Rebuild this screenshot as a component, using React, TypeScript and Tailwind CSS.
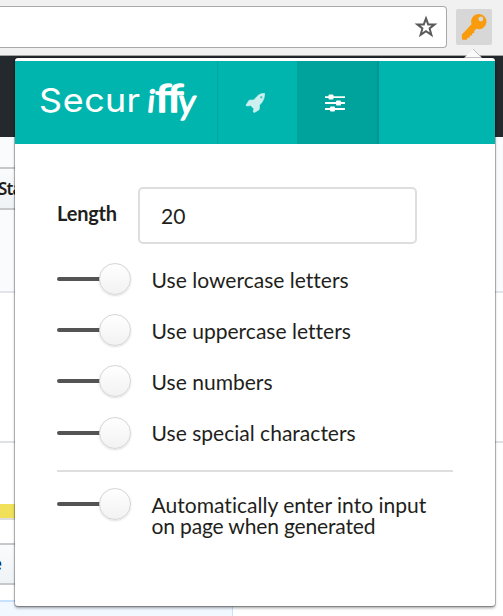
import React from "react";

function Toggle() {
  return (
    <span className="flex h-8 w-[74px] shrink-0 items-center">
      <span className="h-1 w-[43px] rounded-l-full bg-[#545454]" />
      <span className="-ml-px size-8 rounded-full border border-[#d6d6d6] bg-linear-to-b from-white to-[#f2f2f2] shadow-[0_1px_2px_rgba(34,36,38,0.15)]" />
    </span>
  );
}

function Option({ children }: { children: React.ReactNode }) {
  return (
    <label className="flex h-[51.2px] items-start">
      <Toggle />
      <span className="ml-[20.6px] mt-[5.8px] whitespace-nowrap text-[21.05px] leading-[21px]">{children}</span>
    </label>
  );
}

function Logo() {
  return (
    <svg className="h-[83px] w-[202px]" viewBox="15 61 202 83" fill="white" stroke="white" strokeLinejoin="round" strokeLinecap="round">
      <g fontFamily="Inter, sans-serif" fontSize="32.5" strokeWidth="0.1">
        <text transform="translate(39 112.3) scale(1.1 1)" x="0 21.6 41.2 60 79.6">Secur</text>
      </g>
      <g fontFamily="Lato, sans-serif" strokeWidth="1.4">
        <text transform="translate(146.5 112.3) skewX(-6)" fontSize="31">i</text>
        <text transform="translate(155 111.8) scale(1.22 1)" fontSize="39">f</text>
        <text transform="translate(167 111.8) scale(1.22 1)" fontSize="39">f</text>
        <text transform="translate(177.5 113.5) skewX(-6) scale(.94 1)" fontSize="35">y</text>
      </g>
    </svg>
  );
}

function KeyIcon() {
  return (
    <svg className="size-9" viewBox="456 9 36 36">
      <path
        fill="#f89c0e"
        fillRule="evenodd"
        d="M479 14.8a7.6 7.6 0 1 1-2.6 14.8l-2.3 2.2.2 2-2 .3-.2 2.2-2.2.1-.3 2.2-2.1 0-.4 2h-4.4q-.8 0-.8-.8v-4.6l9.6-10.1a7.8 7.8 0 0 1 7.5-10.3zm1.8 2.6a2.4 2.4 0 1 0 .1 4.8 2.4 2.4 0 0 0-.1-4.8z"
        transform="translate(0 -.8)"
      />
    </svg>
  );
}

function RocketIcon() {
  return (
    <svg className="mr-[5px] h-5 w-5" viewBox="245 93 20 20" fill="#ccf0ef">
      <path
        fillRule="evenodd"
        d="M264.5 93.2c.2 4.6-1.2 8.2-5 11.8l-.3 4.3-.4.6-4.6 2.7-.9-.7.6-3.2-3.2-3.2-3.9.5-.8-.8 3.1-4.9 5-.4c3.3-4.4 6-6.5 10.4-6.7zm-3.3 2.7a1.25 1.25 0 1 0 0 2.5 1.25 1.25 0 0 0 0-2.5z"
        stroke="#ccf0ef"
        strokeWidth="0.7"
        strokeLinejoin="round"
      />
    </svg>
  );
}

function Sliders() {
  return (
    <svg className="h-[18px] w-5" viewBox="0 0 20 18" fill="white">
      <path d="M0 2.2h20v1.8H0zM0 8.1h20v1.8H0zM0 14.1h20v1.8H0z" />
      <rect x="3.5" y="0.6" width="5" height="4.8" rx="1" />
      <rect x="11" y="6.6" width="5" height="4.8" rx="1" />
      <rect x="5" y="12.6" width="5" height="4.8" rx="1" />
    </svg>
  );
}

export default function App() {
  return (
    <div className="relative h-[616px] w-[503px] overflow-hidden bg-white font-['Lato',sans-serif] text-[#1f1f20] [font-variant-ligatures:none]">
      <div className="flex h-14 items-start border-b border-[#a3a3a3] bg-[#f1f1f1] pt-1.5">
        <div className="flex h-[42px] w-[447px] items-center justify-end rounded-r-[4px] border border-l-0 border-[#a9a9a9] bg-white pr-2">
          <svg className="size-6" viewBox="0 0 24 24" fill="none" stroke="#5a5a5a" strokeWidth="2">
            <path d="m12 3.4 2.2 6h6.4l-5 4 1.8 6.4-5.4-3.7-5.4 3.7 1.8-6.4-5-4h6.4z" />
          </svg>
        </div>
        <div className="ml-[9px] mt-[3px] size-9 rounded-[2px] bg-[#d7d7d7]">
          <KeyIcon />
        </div>
      </div>
      <div className="h-[81px] bg-[#24292e]" />
      <div className="h-[156px] border-b-2 border-[#e1e4e8] bg-[#fafbfc] pt-[30px]">
        <div className="flex h-[43px] w-10 items-center border-y-2 border-[#c6c9cc] bg-linear-to-b from-[#fafbfc] to-[#eff3f6] font-['Noto_Sans',sans-serif] text-[17px] font-semibold">
          <span className="-ml-0.5 tracking-[-0.9px]">Star</span>
        </div>
      </div>
      <div className="h-[150px] border-b-2 border-[#dfe2e5]" />
      <div className="mt-[61px] h-4 w-10 border-b-2 border-[#dddddd] bg-[#f1e05a]" />
      <div className="mt-[23px] flex h-[42px] w-10 items-center border-y-2 border-[#c6c9cc] bg-linear-to-b from-[#fafbfc] to-[#eff3f6] font-['Noto_Sans',sans-serif] text-[17px] font-semibold text-[#032f62]">
        <span className="-ml-2">e</span>
      </div>
      <div className="mt-[15px] h-4 w-[233px] border-r border-t-2 border-[#c8e1ff] bg-[#f1f8ff]" />

      <svg className="absolute left-[464px] top-12 h-3 w-[18px]" viewBox="0 0 18 12">
        <path d="M0 10 9 1l9 9v2H0z" fill="#fafafa" />
        <path d="m9 1 8.5 8.5" stroke="#bcbcbc" fill="none" />
      </svg>

      <main className="absolute left-[15px] top-[58px] h-[548px] w-[480px] rounded-[3px] bg-white shadow-[0_0_0_1px_rgba(0,0,0,0.22),0_2px_3px_rgba(0,0,0,0.38)]">
        <header className="mt-[3px] flex h-[83px] bg-[#00b5ad]">
          <div className="w-[203px] border-r border-[#00a59e]">
            <Logo />
          </div>
          <button className="flex w-[79px] items-center justify-center">
            <RocketIcon />
          </button>
          <button className="flex w-[82px] items-center justify-center border-r-2 border-[#00958f] bg-[#00a39c] pr-1">
            <Sliders />
          </button>
        </header>
        <section className="px-[42px] pt-[43px]">
          <div className="flex items-start">
            <label className="mt-3 w-[81px] text-[20px] font-bold leading-7 tracking-[-0.2px]">Length</label>
            <div className="flex h-[57px] w-[279px] items-center rounded-[5px] border-2 border-[#dededf] pl-[21px] text-[21.1px]">20</div>
          </div>
          <div className="mt-[19px] h-[207px]">
            <Option>Use lowercase letters</Option>
            <Option>Use uppercase letters</Option>
            <Option>Use numbers</Option>
            <Option>Use special characters</Option>
          </div>
          <hr className="mb-[16px] border-t-2 border-[#dededf]" />
          <Option>
            Automatically enter into input
            <br />
            <span className="tracking-[-0.18px]">on page when generated</span>
          </Option>
        </section>
      </main>
    </div>
  );
}
